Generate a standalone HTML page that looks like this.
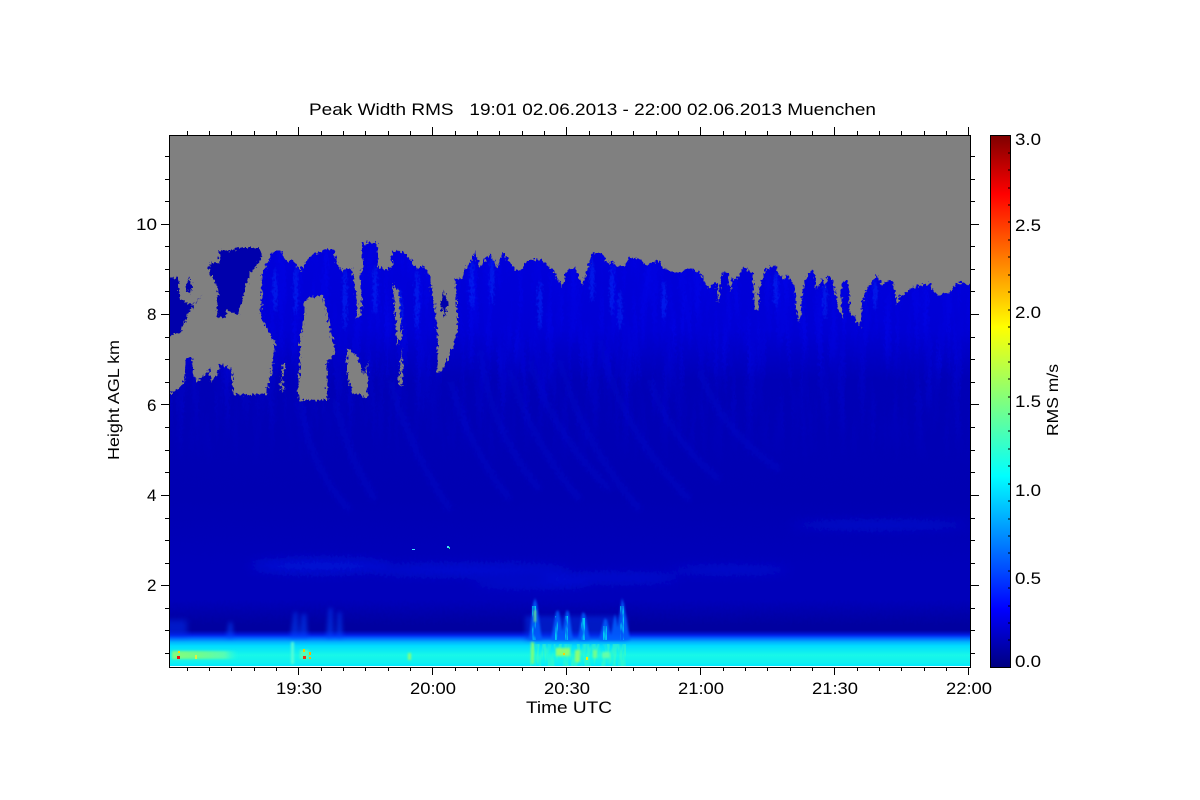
<!DOCTYPE html>
<html><head><meta charset="utf-8"><style>
html,body{margin:0;padding:0;background:#fff;width:1200px;height:800px;overflow:hidden}
svg{display:block}
text{font-family:"Liberation Sans",sans-serif;fill:#000}
</style></head><body>
<svg width="1200" height="800" viewBox="0 0 1200 800">
<defs>
<linearGradient id="cb" x1="0" y1="1" x2="0" y2="0">
<stop offset="0" stop-color="#00007f"/><stop offset=".11" stop-color="#0000ff"/><stop offset=".36" stop-color="#00ffff"/><stop offset=".5" stop-color="#7fff7f"/><stop offset=".64" stop-color="#ffff00"/><stop offset=".89" stop-color="#ff0000"/><stop offset="1" stop-color="#7f0000"/>
</linearGradient>
<linearGradient id="cl" gradientUnits="userSpaceOnUse" x1="0" y1="245" x2="0" y2="667">
<stop offset="0" stop-color="#0000dc"/><stop offset=".2" stop-color="#0000d4"/><stop offset=".32" stop-color="#0000b6"/><stop offset=".6" stop-color="#0000b2"/><stop offset=".76" stop-color="#0000ba"/><stop offset=".84" stop-color="#0000ba"/><stop offset=".9" stop-color="#0000a0"/><stop offset="1" stop-color="#0000a0"/>
</linearGradient>
<linearGradient id="bl" x1="0" y1="0" x2="0" y2="1">
<stop offset="0" stop-color="#0010d0" stop-opacity="0"/><stop offset=".14" stop-color="#0020e8"/><stop offset=".22" stop-color="#0060ff"/><stop offset=".33" stop-color="#00b0ff"/><stop offset=".44" stop-color="#00dcff"/><stop offset=".7" stop-color="#18f8e8"/><stop offset=".9" stop-color="#10f0f0"/><stop offset="1" stop-color="#00e8ff"/>
</linearGradient>
<linearGradient id="gp" x1="0" y1="0" x2="1" y2="0">
<stop offset="0" stop-color="#b0ff50"/><stop offset=".45" stop-color="#90ff70"/><stop offset=".8" stop-color="#70ffa0"/><stop offset="1" stop-color="#40ffd0" stop-opacity="0"/>
</linearGradient>
<linearGradient id="fd" gradientUnits="userSpaceOnUse" x1="0" y1="240" x2="0" y2="470">
<stop offset="0" stop-color="#fff"/><stop offset=".5" stop-color="#fff"/><stop offset="1" stop-color="#000"/>
</linearGradient>
<mask id="fm" maskUnits="userSpaceOnUse" x="150" y="230" width="840" height="300"><rect x="150" y="230" width="840" height="300" fill="url(#fd)"/></mask>
<filter id="b1" x="-100%" y="-100%" width="300%" height="300%"><feGaussianBlur stdDeviation="2"/></filter>
<filter id="b2" x="-100%" y="-100%" width="300%" height="300%"><feGaussianBlur stdDeviation="1"/></filter>
<filter id="b3" x="-100%" y="-100%" width="300%" height="300%"><feGaussianBlur stdDeviation="3"/></filter>
<filter id="b5" x="-100%" y="-100%" width="300%" height="300%"><feGaussianBlur stdDeviation="5"/></filter>
<filter id="tx" filterUnits="userSpaceOnUse" x="170" y="240" width="800" height="240" color-interpolation-filters="sRGB"><feTurbulence type="fractalNoise" baseFrequency=".13 .012" numOctaves="3" seed="7"/><feColorMatrix values="0 0 0 0 0  0 0 0 0 .03  0 0 0 0 1  1.8 0 0 0 -.72"/></filter>
<filter id="jag" filterUnits="userSpaceOnUse" x="150" y="230" width="840" height="460" color-interpolation-filters="sRGB"><feTurbulence type="fractalNoise" baseFrequency=".42 .3" numOctaves="2" seed="3" result="n"/><feDisplacementMap in="SourceGraphic" in2="n" scale="7" xChannelSelector="R" yChannelSelector="G"/></filter>
<filter id="nz" filterUnits="userSpaceOnUse" x="165" y="590" width="810" height="80" color-interpolation-filters="sRGB"><feTurbulence type="fractalNoise" baseFrequency=".3 .07" numOctaves="2" seed="11"/><feColorMatrix values="0 0 0 0 0  0 0 0 0 0  0 0 0 0 0  3.6 0 0 0 -1.3" result="m"/><feComposite in="SourceGraphic" in2="m" operator="in"/></filter>
<clipPath id="pl"><rect x="170" y="136" width="800" height="530"/></clipPath>
<clipPath id="cc"><path d="M160 680V396L172 393 180 387 184 382 186 358 192 358 194 375 196 381 203 378 209 368 211 382 217 375 220 365 223 364 232 370 233 394 245 395 266 394 271 375 274 350 276 345 268 330 261 318 262 275 268 262 272 252 282 252 286 262 293 260 300 270 305 263 312 255 318 252 326 249 334 249 336 262 342 272 346 268 351 268 355 285 357 303 357 318 360 318 362 305 360 280 363 263 362 243 377 243 378 267 388 270 392 268 392 253 398 250 410 258 417 270 423 265 430 277 435 310 438 340 437 373 443 370 450 353 455 340 458 330 455 277 460 280 467 267 475 252 480 267 490 253 497 268 503 252 510 263 518 272 523 268 528 260 542 260 553 270 562 287 567 270 575 267 582 285 588 267 592 253 602 253 607 263 613 262 617 267 625 265 630 258 638 258 647 265 657 260 663 267 670 272 682 272 688 267 700 273 708 287 717 283 718 303 722 273 728 272 730 292 733 277 737 280 743 267 753 273 755 310 758 310 760 287 765 270 770 268 775 265 778 272 783 280 788 275 795 287 796 308 800 322 802 297 805 280 812 270 815 277 817 290 822 278 825 288 828 275 833 280 838 308 843 320 841 293 843 280 847 280 849 293 850 313 855 317 860 327 862 302 868 287 877 275 882 285 888 280 893 282 897 305 900 295 907 292 913 287 923 285 930 283 933 290 938 295 950 293 957 283 963 282 980 293V680Z"/></clipPath>
</defs>

<text x="309" y="115" font-size="17" textLength="567" lengthAdjust="spacingAndGlyphs" xml:space="preserve">Peak Width RMS   19:01 02.06.2013 - 22:00 02.06.2013 Muenchen</text>

<!-- plot area -->
<rect x="170" y="136" width="800" height="531" fill="#808080"/>
<g clip-path="url(#pl)">
<g filter="url(#jag)">
<path fill="#0000ac" d="M162 277L178 278 180 300 193 305 202 295 190 310 180 333 162 337Z"/>
<path fill="#0000ac" d="M189 277L193 287 189 294 186 287Z"/>
<path fill="#0000ac" d="M218 250L227 252 238 248 260 248 262 258 250 273 243 297 238 315 228 310 225 318 217 317 218 287 210 273 208 263 220 263Z"/>
<path fill="#0000ac" d="M443 290L448 303 445 317 441 307Z"/>
<g clip-path="url(#cc)">
<rect x="160" y="240" width="820" height="440" fill="url(#cl)"/>
<g mask="url(#fm)"><rect x="170" y="240" width="800" height="240" filter="url(#tx)" opacity=".42"/></g>
<g fill="#0030f8" opacity=".55" filter="url(#b2)">
<ellipse cx="275" cy="290" rx="2" ry="22"/><ellipse cx="296" cy="290" rx="2" ry="25"/><ellipse cx="345" cy="300" rx="2" ry="30"/>
<ellipse cx="375" cy="290" rx="2" ry="25"/><ellipse cx="417" cy="300" rx="2" ry="30"/><ellipse cx="400" cy="310" rx="2" ry="20"/>
<ellipse cx="472" cy="285" rx="2" ry="25"/><ellipse cx="492" cy="280" rx="2" ry="25"/><ellipse cx="540" cy="305" rx="2" ry="25"/>
<ellipse cx="592" cy="280" rx="2" ry="22"/><ellipse cx="612" cy="290" rx="2" ry="25"/><ellipse cx="620" cy="310" rx="2" ry="20"/><ellipse cx="664" cy="300" rx="2" ry="20"/>
<ellipse cx="776" cy="290" rx="2" ry="18"/><ellipse cx="825" cy="300" rx="2" ry="18"/><ellipse cx="875" cy="295" rx="2" ry="15"/>
</g>
<g fill="none" stroke="#0008d8" stroke-width="6" opacity=".32" filter="url(#b3)">
<path d="M335 400Q345 450 375 500"/><path d="M390 380Q410 450 450 510"/><path d="M480 350Q490 430 540 490"/><path d="M510 370Q530 440 580 500"/><path d="M560 360Q580 440 640 510"/><path d="M600 340Q620 430 690 500"/><path d="M300 400Q310 470 350 510"/><path d="M650 380Q670 440 720 480"/><path d="M450 380Q470 450 510 500"/><path d="M530 360Q550 430 610 490"/><path d="M700 370Q720 430 780 470"/>
</g>
<g fill="#0014dc" filter="url(#b5)" opacity=".8">
<ellipse cx="320" cy="566" rx="70" ry="7"/><ellipse cx="470" cy="570" rx="100" ry="5"/><ellipse cx="610" cy="578" rx="70" ry="4"/><ellipse cx="530" cy="584" rx="60" ry="3"/><ellipse cx="730" cy="570" rx="60" ry="3"/><ellipse cx="880" cy="525" rx="90" ry="3"/>
</g>
</g>
<!-- gaps in the cloud -->
<g fill="#808080">
<path d="M303 303L308 298 323 295 328 317 335 353 327 362 327 400 300 400 298 393 300 357 300 340 305 310Z"/>
<path d="M283 363L286 363 282 380 285 392 280 390Z"/>
<path d="M347 347L357 357 363 375 368 362 367 397 352 393 347 373Z"/>
<path d="M393 282L399 293 402 337 397 345 395 313Z"/>
<path d="M402 347L400 367 398 383 403 387Z"/>
</g>
</g>
<!-- boundary layer -->
<rect x="170" y="630" width="800" height="36" fill="url(#bl)"/>
<rect x="165" y="620" width="22" height="16" fill="#0030f0" opacity=".5" filter="url(#b3)"/>
<g fill="#0048ff" opacity=".55" filter="url(#b1)">
<path d="M226 638l3-16 3 0 2 16z"/><path d="M290 638l4-26 3 0 2 26z"/><path d="M299 638l3-24 4 0 2 24z"/>
<path d="M326 638l3-30 3 0 2 30z"/><path d="M336 638l2-26 3 0 2 26z"/>
</g>
<rect x="525" y="616" width="102" height="24" fill="#0030e8" opacity=".5" filter="url(#b1)"/>
<g fill="#0060ff" opacity=".85" filter="url(#b2)">
<path d="M529 640l4-36 2-6 2 6 5 36z"/><path d="M551 640l5-28 2-2 1 2 5 28z"/><path d="M561 640l5-28 1-2 2 2 4 28z"/><path d="M578 640l4-26 1-2 2 2 5 26z"/><path d="M599 640l5-20 1-2 2 2 5 20z"/><path d="M616 640l5-36 1-6 2 6 6 36z"/><path d="M610 640l4-22 1-4 1 4 4 22z"/>
</g>
<g fill="#00c8f4" filter="url(#nz)">
<rect x="532" y="606" width="4" height="34"/><rect x="555" y="616" width="3" height="24"/><rect x="565" y="616" width="3" height="24"/><rect x="581" y="618" width="4" height="22"/><rect x="603" y="626" width="4" height="14"/><rect x="620" y="606" width="4" height="34"/>
<rect x="530" y="644" width="96" height="22" fill="#50ffb0" fill-opacity=".45"/>
</g>
<g filter="url(#b2)" opacity=".85">
<rect x="534" y="610" width="2" height="12" fill="#90ff70"/>
<rect x="531" y="642" width="3" height="22" fill="#90ff60"/>
<rect x="172" y="651" width="66" height="8" fill="url(#gp)" opacity=".85"/>
<rect x="556" y="648" width="14" height="8" fill="#a0ff60"/><rect x="575" y="650" width="5" height="12" fill="#a0ff60"/><rect x="593" y="650" width="4" height="8" fill="#80ff80"/><rect x="602" y="652" width="8" height="6" fill="#70ffa0"/>
<rect x="300" y="650" width="9" height="9" fill="#60ffb0"/><rect x="291" y="642" width="3" height="22" fill="#60ffd0"/><rect x="408" y="653" width="3" height="7" fill="#a0ff60"/>
</g>
</g>
<g>
<rect x="177" y="656" width="3" height="3" fill="#f01010"/><rect x="178" y="651" width="2" height="2" fill="#ffe000"/><rect x="195" y="655" width="2" height="4" fill="#e0f040"/>
<rect x="303" y="656" width="3" height="3" fill="#f03010"/><rect x="303" y="649" width="2" height="3" fill="#f0d000"/><rect x="309" y="652" width="2" height="3" fill="#ffb000"/><rect x="309" y="657" width="2" height="2" fill="#ffb000"/>
<rect x="563" y="653" width="2" height="2" fill="#ffd000"/><rect x="586" y="657" width="2" height="3" fill="#f0f000"/>
<rect x="412" y="549" width="3" height="1" fill="#40e0ff"/><rect x="447" y="546" width="2" height="2" fill="#40e0ff"/><rect x="449" y="547" width="1" height="2" fill="#30e090"/>
</g>
<rect x="170" y="666" width="800" height="1" fill="#fff"/>

<!-- axes -->
<g shape-rendering="crispEdges" fill="none" stroke="#000" stroke-width="1">
<rect x="169.500" y="135.500" width="801" height="532" stroke-width="1.400"/>
<path d="M187.500 667v4M209.500 667v4M231.500 667v4M254.500 667v4M276.500 667v4M298.500 667v8M321.500 667v4M343.500 667v4M365.500 667v4M388.500 667v4M410.500 667v4M432.500 667v8M455.500 667v4M477.500 667v4M499.500 667v4M522.500 667v4M544.500 667v4M566.500 667v8M589.500 667v4M611.500 667v4M633.500 667v4M656.500 667v4M678.500 667v4M700.500 667v8M723.500 667v4M745.500 667v4M767.500 667v4M790.500 667v4M812.500 667v4M834.500 667v8M857.500 667v4M879.500 667v4M901.500 667v4M924.500 667v4M946.500 667v4M968.500 667v8"/>
<path d="M187.500 135v-4M209.500 135v-4M231.500 135v-4M254.500 135v-4M276.500 135v-4M298.500 135v-8M321.500 135v-4M343.500 135v-4M365.500 135v-4M388.500 135v-4M410.500 135v-4M432.500 135v-8M455.500 135v-4M477.500 135v-4M499.500 135v-4M522.500 135v-4M544.500 135v-4M566.500 135v-8M589.500 135v-4M611.500 135v-4M633.500 135v-4M656.500 135v-4M678.500 135v-4M700.500 135v-8M723.500 135v-4M745.500 135v-4M767.500 135v-4M790.500 135v-4M812.500 135v-4M834.500 135v-8M857.500 135v-4M879.500 135v-4M901.500 135v-4M924.500 135v-4M946.500 135v-4M968.500 135v-8"/>
<path d="M169 156.500h-4M169 179.500h-4M169 201.500h-4M169 224.500h-8M169 246.500h-4M169 269.500h-4M169 291.500h-4M169 314.500h-8M169 337.500h-4M169 359.500h-4M169 382.500h-4M169 404.500h-8M169 427.500h-4M169 450.500h-4M169 472.500h-4M169 495.500h-8M169 518.500h-4M169 540.500h-4M169 563.500h-4M169 585.500h-8M169 608.500h-4M169 630.500h-4M169 653.500h-4"/>
<path d="M971 156.500h4M971 179.500h4M971 201.500h4M971 224.500h8M971 246.500h4M971 269.500h4M971 291.500h4M971 314.500h8M971 337.500h4M971 359.500h4M971 382.500h4M971 404.500h8M971 427.500h4M971 450.500h4M971 472.500h4M971 495.500h8M971 518.500h4M971 540.500h4M971 563.500h4M971 585.500h8M971 608.500h4M971 630.500h4M971 653.500h4"/>
</g>

<!-- tick labels -->
<g font-size="17">
<text x="276" y="694" textLength="46" lengthAdjust="spacingAndGlyphs">19:30</text>
<text x="410" y="694" textLength="46" lengthAdjust="spacingAndGlyphs">20:00</text>
<text x="544" y="694" textLength="46" lengthAdjust="spacingAndGlyphs">20:30</text>
<text x="678" y="694" textLength="46" lengthAdjust="spacingAndGlyphs">21:00</text>
<text x="812" y="694" textLength="46" lengthAdjust="spacingAndGlyphs">21:30</text>
<text x="946" y="694" textLength="46" lengthAdjust="spacingAndGlyphs">22:00</text>
<text x="526" y="713" textLength="86" lengthAdjust="spacingAndGlyphs">Time UTC</text>
<text x="136" y="230" textLength="21" lengthAdjust="spacingAndGlyphs">10</text>
<text x="147" y="320">8</text>
<text x="147" y="411">6</text>
<text x="147" y="501">4</text>
<text x="147" y="591">2</text>
<text transform="translate(119 460) rotate(-90)" textLength="120" lengthAdjust="spacingAndGlyphs" font-size="16">Height AGL km</text>
</g>

<!-- colour bar -->
<rect x="990.500" y="135.500" width="20" height="532" fill="url(#cb)" stroke="#000" stroke-width="1.200" shape-rendering="crispEdges"/>
<path shape-rendering="crispEdges" stroke="#000" fill="none" d="M1008 153h2M1008 170h2M1008 188h2M1008 205h2M1008 222h2M1008 240h2M1008 257h2M1008 275h2M1008 292h2M1008 310h2M1008 327h2M1008 344h2M1008 362h2M1008 379h2M1008 397h2M1008 414h2M1008 431h2M1008 449h2M1008 466h2M1008 484h2M1008 501h2M1008 519h2M1008 536h2M1008 553h2M1008 571h2M1008 588h2M1008 606h2M1008 623h2M1008 640h2"/>
<g font-size="17">
<text x="1015" y="145" textLength="26" lengthAdjust="spacingAndGlyphs">3.0</text>
<text x="1015" y="231" textLength="26" lengthAdjust="spacingAndGlyphs">2.5</text>
<text x="1015" y="318" textLength="26" lengthAdjust="spacingAndGlyphs">2.0</text>
<text x="1015" y="407" textLength="26" lengthAdjust="spacingAndGlyphs">1.5</text>
<text x="1015" y="496" textLength="26" lengthAdjust="spacingAndGlyphs">1.0</text>
<text x="1015" y="584" textLength="26" lengthAdjust="spacingAndGlyphs">0.5</text>
<text x="1015" y="667" textLength="26" lengthAdjust="spacingAndGlyphs">0.0</text>
<text transform="translate(1058 436) rotate(-90)" textLength="72" lengthAdjust="spacingAndGlyphs" font-size="16">RMS m/s</text>
</g>
</svg>
</body></html>
